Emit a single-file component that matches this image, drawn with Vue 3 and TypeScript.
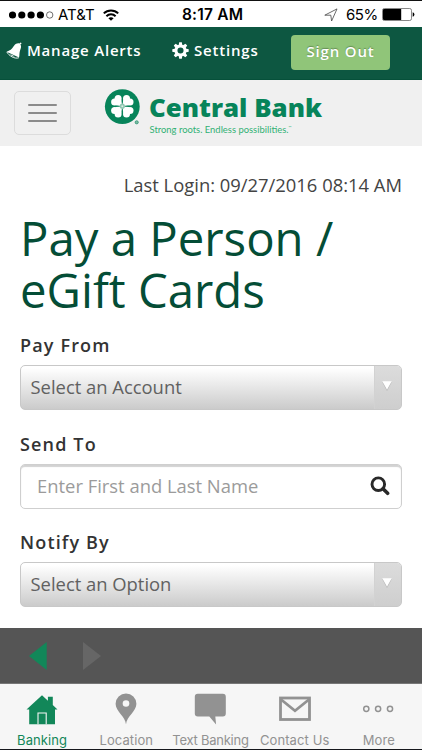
<script setup lang="ts">
type Field = { label: string; text: string; kind: 'select' | 'search' }
const fields: Field[] = [
  { label: 'Pay From', text: 'Select an Account', kind: 'select' },
  { label: 'Send To', text: 'Enter First and Last Name', kind: 'search' },
  { label: 'Notify By', text: 'Select an Option', kind: 'select' },
]
const tabs: { id: string; label: string }[] = [
  { id: 'banking', label: 'Banking' },
  { id: 'location', label: 'Location' },
  { id: 'text', label: 'Text Banking' },
  { id: 'contact', label: 'Contact Us' },
  { id: 'more', label: 'More' },
]
const leafAngles = [0, 90, 180, 270]
const gearAngles = [0, 45, 90, 135, 180, 225, 270, 315]
</script>

<template>
  <div class="screen">
    <header class="status">
      <svg class="signal" width="45" height="10" viewBox="0 0 45 10">
        <circle v-for="n in 4" :key="n" :cx="3.5 + (n - 1) * 9.3" cy="5" r="3.6" fill="#000" />
        <circle cx="40.7" cy="5" r="3.2" fill="none" stroke="#333" stroke-width=".7" />
      </svg>
      <span class="carrier">AT&amp;T</span>
      <svg class="wifi" width="16" height="12" viewBox="0 0 16 12" fill="none" stroke="#000" stroke-width="2">
        <path d="M.8 4.4C4.8.4 11.2.4 15.2 4.4M3.4 7.2c2.6-2.5 6.6-2.5 9.2 0" />
        <path d="M8 11.8 5.4 9.2c1.5-1.4 3.7-1.4 5.2 0z" fill="#000" stroke="none" />
      </svg>
      <span class="clock">8:17 AM</span>
      <svg class="arrow" width="14" height="14" viewBox="0 0 14 14">
        <path d="M.8 7.2 13 .9 7.6 13 6.8 7.2z" fill="none" stroke="#444" stroke-width=".8" />
      </svg>
      <span class="percent">65%</span>
      <svg class="battery" width="33" height="13" viewBox="0 0 33 13">
        <rect x=".5" y=".5" width="29" height="12" rx="1.8" fill="#fff" stroke="#555" stroke-width=".7" />
        <path d="M2 1h17.2v11H2a1 1 0 0 1-1-1V2a1 1 0 0 1 1-1z" />
        <path d="M30.7 4.3q1.7.5 1.7 2.2t-1.7 2.2z" />
      </svg>
    </header>

    <nav class="top">
      <a class="link alerts">
        <svg width="16" height="18" viewBox="0 0 16 18">
          <path d="M14.6.4 13.4 1.4C9.500.4 8 4 6 6.600 4.400 8.500 2 9 .5 9.800L13 15.600c.7-2.400.2-4.200.9-6.600.7-2.200 2-4.300.5-6.400L15.700 1.300z" fill="#fff" />
          <path d="M.8 10C3 13.800 8.500 17.200 12.800 15.800" fill="none" stroke="#fff" stroke-width=".9" />
          <path d="M4 12q1.600 2.900 4.600 2.300z" fill="#fff" />
        </svg>
        <span>Manage Alerts</span>
      </a>
      <a class="link settings">
        <svg width="17" height="17" viewBox="-8.5 -8.5 17 17">
          <circle r="4.500" fill="none" stroke="#fff" stroke-width="2.900" />
          <path v-for="a in gearAngles" :key="a" d="M-1.900-5-1.300-8.200H1.300L1.900-5z" fill="#fff" :transform="`rotate(${a})`" />
        </svg>
        <span>Settings</span>
      </a>
      <button class="signout">Sign Out</button>
    </nav>

    <div class="brand">
      <button class="burger"><i /><i /><i /></button>
      <svg class="logo" width="222" height="52" viewBox="0 0 222 52">
        <circle cx="18.300" cy="18.600" r="17.400" fill="#07845a" />
        <g transform="translate(18.3 18.2)">
          <g v-for="a in leafAngles" :key="a" :transform="`rotate(${a})`" fill="#fff">
            <circle cx="-4.200" cy="-7.700" r="3.500" />
            <circle cx="-7.700" cy="-4.200" r="3.500" />
            <path d="M.3.300-.5-3-.9-6.500-4-8.500-8.500-4-6.500-.9-3-.5z" />
          </g>
          <circle r="2.600" fill="#8fc7b1" /><circle r="1" fill="#dcefe8" />
        </g>
        <circle cx="32.700" cy="34.300" r="1.600" fill="#7fbba4" stroke="#07845a" stroke-width=".6" />
        <text class="name" x="45" y="28.500" textLength="173" lengthAdjust="spacingAndGlyphs">Central Bank</text>
        <text class="motto" x="45.500" y="44.500" textLength="142" lengthAdjust="spacingAndGlyphs">Strong roots. Endless possibilities.<tspan class="tm" dy="-3.500">™</tspan></text>
      </svg>
    </div>

    <main>
      <p class="login">Last Login: 09/27/2016 08:14 AM</p>
      <h1>Pay a Person /<br />eGift Cards</h1>
      <section v-for="f in fields" :key="f.label" class="field">
        <label>{{ f.label }}</label>
        <div class="box" :class="f.kind">
          <span class="value">{{ f.text }}</span>
          <span v-if="f.kind === 'select'" class="drop">
            <svg width="10" height="10" viewBox="0 0 10 10">
              <path d="M.3 1.300h9.400L5 10z" fill="#b5b5b5" /><path d="M.3.300h9.400L5 8.800z" fill="#fff" />
            </svg>
          </span>
          <svg v-else class="lens" width="20" height="20" viewBox="0 0 20 20" fill="none" stroke="#292929">
            <circle cx="8.300" cy="8.200" r="6.300" stroke-width="2.900" />
            <path d="m13 12.800 4.600 4.500" stroke-width="3.600" stroke-linecap="round" />
          </svg>
        </div>
      </section>
    </main>

    <div class="history">
      <svg width="76" height="28" viewBox="0 0 76 28">
        <path d="M1 14 18.700 0v28z" fill="#128759" /><path d="M55 0v28l18-14z" fill="#666" />
      </svg>
    </div>

    <footer>
      <div v-for="t in tabs" :key="t.id" class="tab" :class="t.id">
        <svg width="34" height="34" viewBox="0 0 34 34">
          <template v-if="t.id === 'banking'">
            <path d="M17 2.200 1.500 16.500H4.200V31.300H30V16.500h2.500L27.800 12V3.800h-4.900v4z" fill="#128759" />
            <path d="M13 31.300V20H21.200v11.300" fill="none" stroke="#f6f6f6" stroke-width="1.100" />
          </template>
          <template v-else-if="t.id === 'location'">
            <path d="M17 31.200C16.300 23.500 6.600 18.500 6.600 10.800a10.400 10.400 0 0 1 20.800 0C27.400 18.500 17.700 23.500 17 31.200z" fill="#929292" />
            <circle cx="17" cy="10.500" r="3.300" fill="#f6f6f6" />
          </template>
          <path v-else-if="t.id === 'text'" d="M4.800.7h25a3 3 0 0 1 3 3v16.700a3 3 0 0 1-3 3h-7.500l.8 8-6.800-8H4.800a3 3 0 0 1-3-3V3.700a3 3 0 0 1 3-3z" fill="#929292" />
          <g v-else-if="t.id === 'contact'" fill="none" stroke="#929292" stroke-width="2.800">
            <rect x="2.500" y="5" width="29" height="21.500" /><path d="m3 6.500 14 11.300L31 6.500" />
          </g>
          <g v-else fill="none" stroke="#929292" stroke-width="1.500">
            <circle cx="4.300" cy="15.800" r="2.600" /><circle cx="16.100" cy="15.800" r="2.600" /><circle cx="28" cy="15.800" r="2.600" />
          </g>
        </svg>
        <span>{{ t.label }}</span>
      </div>
    </footer>
  </div>
</template>

<style>
body { margin: 0; background: #fff; }
</style>

<style scoped>
* { box-sizing: border-box; }
.screen { width: 422px; height: 750px; overflow: hidden; display: flex; flex-direction: column; background: #fff; border-top: 1px solid #111; border-bottom: 1px solid #15171c; font-family: "Open Sans", sans-serif; color: #333; }
.status { height: 26px; flex: none; display: flex; align-items: center; padding: 1px 0 0 9px; font: 15px/26px Inter, sans-serif; color: #000; white-space: nowrap; }
.carrier { margin-left: 4px; width: 38px; }
.wifi { margin-left: 7px; }
.clock { margin-left: 63px; width: 62px; font-size: 15.500px; font-weight: 600; letter-spacing: .2px; }
.arrow { margin-left: 80px; }
.percent { margin-left: 8px; width: 32px; letter-spacing: -.5px; }
.battery { margin-left: 4px; }
.top { height: 53px; flex: none; display: flex; align-items: flex-start; background: #0d5741; border-bottom: 1px solid #06503a; padding-left: 6px; }
.link { display: flex; gap: 5px; color: #fff; font-weight: 600; font-size: 15px; line-height: 20px; letter-spacing: .8px; white-space: nowrap; margin-top: 12.500px; }
.link svg { flex: none; margin-top: 2px; }
.alerts { width: 166px; }
.settings { width: 119px; }
.signout { width: 99px; height: 35px; margin-top: 8px; border: 0; border-radius: 4px; background: #90c579; color: #fff; font: 600 15px/33px "Open Sans", sans-serif; letter-spacing: .85px; padding: 0 0 2px; text-shadow: 0 -1px 1px rgba(60,90,50,.5); }
.brand { height: 66px; flex: none; display: flex; background: #f0f0f0; padding: 0 0 0 14px; }
.burger { width: 57px; height: 44px; margin-top: 11px; padding: 0; border: 1px solid #dcdcdc; border-radius: 5px; background: transparent; display: flex; flex-direction: column; align-items: center; justify-content: center; gap: 5.500px; }
.burger i { display: block; width: 29px; height: 2.500px; border-radius: 1px; background: #8b8b8b; }
.logo { margin: 8px 0 0 33px; }
.name { font: 800 25px "Open Sans", sans-serif; fill: #07845a; }
.motto { font: 9.500px Lato, sans-serif; fill: #31b174; }
.tm { font-size: 4px; }
main { height: 482px; flex: none; padding: 0 20px; }
.login { margin: 26px 0 0; height: 26px; font-size: 18.400px; line-height: 26px; text-align: right; white-space: nowrap; color: #444; }
h1 { margin: 14px 0 0; font-size: 47.300px; line-height: 51.500px; font-weight: 400; color: #044d36; white-space: nowrap; height: 120px; }
.field { height: 98.700px; }
label { display: block; height: 33px; font-size: 18px; font-weight: 600; line-height: 26px; letter-spacing: 1.150px; color: #333; }
.box { height: 45px; display: flex; align-items: center; border: 1px solid #c8c8c8; border-radius: 5px; font-size: 18.400px; overflow: hidden; white-space: nowrap; }
.select { padding-left: 9.500px; background: linear-gradient(#fff 5%, #cbcbcb); color: #616161; }
.search { padding-left: 16px; padding-right: 11.500px; background: #fff; color: #9b9b9b; box-shadow: inset 0 2px 1px #d2d2d2; border-color: #cfcfcf; }
.value { flex: 1; line-height: 26px; padding-bottom: 1px; }
.drop { width: 27px; height: 43px; background: linear-gradient(#dcdcdc, #cecece); border-left: 1px solid #d2d2d2; display: flex; justify-content: center; padding: 15px 2px 0 0; }
.history { height: 56px; flex: none; background: #555; border-bottom: 1px solid #777; padding: 14px 0 0 28px; }
.history svg { display: block; }
footer { flex: 1; display: grid; grid-template-columns: repeat(5, 84.200px); background: #f6f6f6; }
.tab { display: flex; flex-direction: column; align-items: center; padding-top: 9px; font: 13px/16px Inter, sans-serif; letter-spacing: .1px; color: #929292; white-space: nowrap; }
.tab svg { flex: none; margin-bottom: 5px; }
.tab.banking { color: #128759; }
.tab.text { letter-spacing: -.25px; }
</style>
